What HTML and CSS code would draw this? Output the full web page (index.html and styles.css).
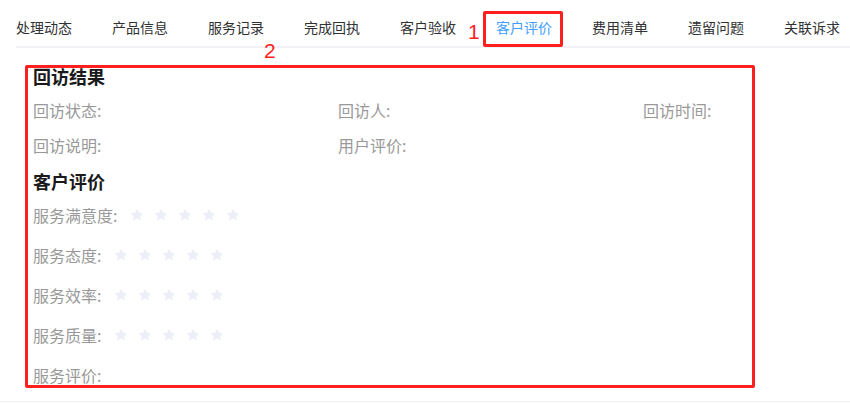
FILE: index.html
```html
<!DOCTYPE html>
<html lang="zh-CN">
<head>
  <meta charset="UTF-8" />
  <title>客户评价</title>
  <link rel="stylesheet" href="styles.css">
</head>
<body>

  <!-- 标签栏 -->
  <div class="tabs">
    <div class="tab">处理动态</div>
    <div class="tab">产品信息</div>
    <div class="tab">服务记录</div>
    <div class="tab">完成回执</div>
    <div class="tab">客户验收</div>
    <div class="tab active">客户评价</div>
    <div class="tab">费用清单</div>
    <div class="tab">遗留问题</div>
    <div class="tab">关联诉求</div>
  </div>

  <!-- 内容区域 -->
  <div class="pane">
    <h3 class="title">回访结果</h3>
    <div class="grid">
      <div class="field">回访状态:</div>
      <div class="field">回访人:</div>
      <div class="field">回访时间:</div>
      <div class="field">回访说明:</div>
      <div class="field">用户评价:</div>
    </div>

    <h3 class="title title-2">客户评价</h3>
    <div class="rate-row"><span class="field">服务满意度:</span><span class="rate" data-n="5"></span></div>
    <div class="rate-row"><span class="field">服务态度:</span><span class="rate" data-n="5"></span></div>
    <div class="rate-row"><span class="field">服务效率:</span><span class="rate" data-n="5"></span></div>
    <div class="rate-row"><span class="field">服务质量:</span><span class="rate" data-n="5"></span></div>
    <div class="rate-row"><span class="field">服务评价:</span></div>
  </div>

  <div class="footer-line"></div>

  <!-- 标注 -->
  <div class="mark mark-tab"></div>
  <div class="mark-num num-1">1</div>
  <div class="mark mark-pane"></div>
  <div class="mark-num num-2">2</div>

  <script>
    // 星星
    const star = '<svg class="star" viewBox="0 0 24 24"><path d="M12 2.6l2.9 5.9 6.5.9-4.7 4.6 1.1 6.5L12 17.4l-5.8 3.1 1.1-6.5-4.7-4.6 6.5-.9z"/></svg>';
    document.querySelectorAll(".rate").forEach(el => {
      el.innerHTML = star.repeat(Number(el.dataset.n));
    });
  </script>
</body>
</html>
```

FILE: styles.css
```css
/* ======= 基础 ======= */
* {
  box-sizing: border-box;
  margin: 0;
  padding: 0;
}
body {
  font-family: "Microsoft YaHei", "Noto Sans CJK SC", sans-serif;
  background: #fff;
  color: #303133;
  position: relative;
  width: 850px;
  height: 403px;
  overflow: hidden;
}

/* ======= 标签栏 ======= */
.tabs {
  display: flex;
  margin: 7px 0 0 16px;
  height: 41px;
  border-bottom: 2px solid #f0f2f5;
  white-space: nowrap;
  overflow: hidden;
}
.tab {
  padding: 0 20px;
  height: 39px;
  line-height: 40px;
  font-size: 14px;
  color: #303133;
}
.tab:first-child {
  padding-left: 0;
}
.tab.active {
  color: #409eff;
}

/* ======= 内容 ======= */
.pane {
  padding: 16px 0 0 33px;
  height: 353px;
}
.title {
  font-size: 18px;
  font-weight: bold;
  color: #1a1a1a;
  line-height: 24px;
}
.title-2 {
  margin-top: 6px;
  margin-bottom: 2px;
}
.grid {
  display: grid;
  grid-template-columns: 305px 305px 1fr;
  margin-top: 5px;
}
.field {
  font-size: 16px;
  color: #999;
  line-height: 35px;
  white-space: nowrap;
}
.rate-row {
  display: flex;
  align-items: center;
  height: 40px;
}
.rate-row .field {
  line-height: 40px;
}
.rate {
  display: flex;
  margin-left: 12px;
}
.star {
  width: 16px;
  height: 16px;
  margin-right: 8px;
  fill: #eceff5;
}

.footer-line {
  height: 1px;
  background: #f0f0f0;
}

/* ======= 标注 ======= */
.mark {
  position: absolute;
  border: 3px solid #ff1f1f;
  border-radius: 2px;
}
.mark-tab {
  left: 483px;
  top: 11px;
  width: 80px;
  height: 36px;
}
.mark-pane {
  left: 25px;
  top: 65px;
  width: 730px;
  height: 323px;
}
.mark-num {
  position: absolute;
  font-family: "Liberation Sans", Arial, sans-serif;
  font-size: 21px;
  color: #ff1f1f;
  line-height: 20px;
}
.num-1 {
  left: 468px;
  top: 22px;
}
.num-2 {
  left: 264px;
  top: 41px;
}
```
